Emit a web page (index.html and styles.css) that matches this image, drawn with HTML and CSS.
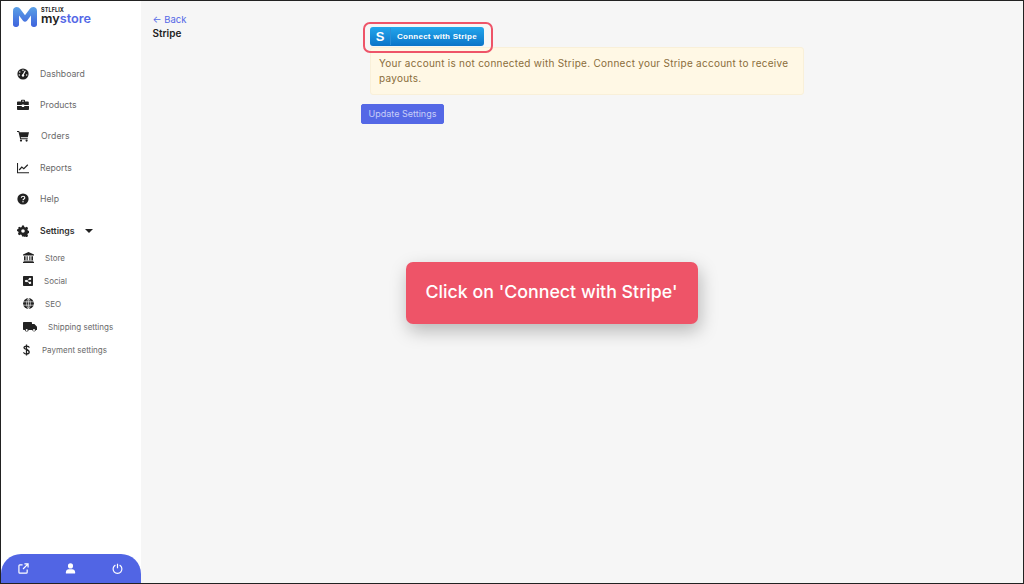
FILE: index.html
```html
<!DOCTYPE html>
<html lang="en">
<head>
  <meta charset="UTF-8">
  <meta name="viewport" content="width=device-width, initial-scale=1.0">
  <title>Stripe - mystore</title>
  <link rel="stylesheet" href="styles.css">
</head>
<body>
  <div class="frame">
    <aside class="sidebar">
      <div class="logo">
        <svg class="logo-mark" viewBox="0 0 24 20" width="24" height="20">
          <defs>
            <linearGradient id="logoGrad" x1="0" y1="0" x2="0" y2="1">
              <stop offset="0" stop-color="#5aa0e6"/>
              <stop offset="1" stop-color="#3f63dd"/>
            </linearGradient>
          </defs>
          <path fill="url(#logoGrad)" d="M0 4c0-3 1.800-4 3.700-4 1.600 0 2.700.7 3.600 2L12 8.200 16.700 2c.9-1.300 2-2 3.600-2C22.200 0 24 1 24 4v13.500c0 1.600-1.100 2.500-2.700 2.500h-.6c-1.600 0-2.700-.9-2.700-2.500V8.500l-4 5.200c-1.200 1.500-2.800 1.500-4 0l-4-5.200v9c0 1.600-1.100 2.500-2.700 2.500h-.6C1.100 20 0 19.100 0 17.500z"/>
        </svg>
        <div class="logo-text">
          <span class="logo-small">STLFLIX</span>
          <span class="logo-name">my<b>store</b></span>
        </div>
      </div>

      <nav class="nav">
        <a class="nav-item"><svg class="icon" viewBox="0 0 12 12"><circle cx="6" cy="6" r="5.600"/><path d="M6 7L8.300 2.800" stroke="#fff" stroke-width="1.200"/><circle cx="6" cy="2.300" r=".7" fill="#fff"/><circle cx="2.800" cy="4" r=".7" fill="#fff"/><circle cx="2.300" cy="7" r=".7" fill="#fff"/><circle cx="9.700" cy="7" r=".7" fill="#fff"/><circle cx="6" cy="7.500" r="1.200" fill="#fff"/></svg>Dashboard</a>
        <a class="nav-item"><svg class="icon" viewBox="0 0 12 12"><path d="M4 2.500V1.500C4 1 4.400.8 4.800.8h2.400c.4 0 .8.200.8.700v1h2.700c.6 0 1.100.4 1.100 1V6H7.200v-.6H4.800V6H0V3.500c0-.6.500-1 1.100-1zm1 0h2v-.7H5zM0 7h4.800v1h2.400V7H12v3c0 .6-.5 1-1.100 1H1.100C.5 11 0 10.600 0 10z"/></svg>Products</a>
        <a class="nav-item nav-orders"><svg class="icon" viewBox="0 0 12 12"><path d="M0 1h2.200l.4 1.200H12l-1.200 5H3.800l.2 1h6.700v1H3.200L1.500 2H0z"/><circle cx="4" cy="10.600" r="1.100"/><circle cx="9.600" cy="10.600" r="1.100"/></svg>Orders</a>
        <a class="nav-item"><svg class="icon" viewBox="0 0 12 12"><path d="M.5 1v9.800H12" fill="none" stroke="#222" stroke-width="1.100"/><path d="M2.200 8l2.600-3 2 1.600L10.800 2.800" fill="none" stroke="#222" stroke-width="1.200"/></svg>Reports</a>
        <a class="nav-item"><svg class="icon" viewBox="0 0 12 12"><circle cx="6" cy="6" r="5.600"/><path d="M4.300 4.700C4.400 3.700 5.100 3.200 6 3.200c1 0 1.800.6 1.800 1.500C7.800 6 6 6 6 7.200" fill="none" stroke="#fff" stroke-width="1.100"/><circle cx="6" cy="8.800" r=".7" fill="#fff"/></svg>Help</a>
        <a class="nav-item nav-active"><svg class="icon" viewBox="0 0 12 12"><path fill-rule="evenodd" d="M5 .4h2l.3 1.500 1 .5L9.700 1.700 11.100 3.100l-.7 1.400.4 1 1.200.5v2l-1.200.4-.4 1 .7 1.500-1.400 1.400-1.400-.7-1 .4L7 11.600H5l-.3-1.500-1-.5-1.400.7L.9 8.900l.7-1.400-.4-1L0 6V4.400l1.200-.4.4-1L.9 3.100 2.300 1.700l1.400.7 1-.5zM6 4.200a1.800 1.800 0 1 0 0 3.600 1.800 1.800 0 0 0 0-3.600z"/></svg>Settings<span class="caret"></span></a>
      </nav>

      <div class="subnav">
        <a class="sub-item"><svg class="sub-icon store-icon" viewBox="0 0 11 11"><path d="M5.500 0L11 2.500V3.500H0V2.500zM1 4.200h1.600v4H1zM3.600 4.200h1.100v4H3.600zM6.300 4.200h1.100v4H6.300zM8.400 4.200H10v4H8.400zM.6 8.800h9.800v1H.6zM0 10h11v1H0z"/></svg>Store</a>
        <a class="sub-item"><svg class="sub-icon social-icon" viewBox="0 0 10 10"><path fill-rule="evenodd" d="M1 0h8c.6 0 1 .4 1 1v8c0 .6-.4 1-1 1H1c-.6 0-1-.4-1-1V1c0-.6.400-1 1-1zm6 1.700a1.200 1.200 0 0 0-1.200 1.500L4 4.200a1.200 1.200 0 1 0 0 1.600l1.800 1a1.200 1.200 0 1 0 .4-.8l-1.800-1a1 1 0 0 0 0-.3l1.800-1A1.200 1.200 0 1 0 7 1.700z"/></svg>Social</a>
        <a class="sub-item"><svg class="sub-icon seo-icon" viewBox="0 0 11 11"><circle cx="5.500" cy="5.500" r="5.400"/><path d="M0 3.800h11M0 7.200h11M5.500 0v11M5.500 0C3 2.500 3 8.500 5.500 11M5.500 0C8 2.500 8 8.500 5.500 11" fill="none" stroke="#fff" stroke-width=".6"/></svg>SEO</a>
        <a class="sub-item"><svg class="sub-icon ship-icon" viewBox="0 0 14 10"><path d="M1 0h7c.6 0 1 .4 1 1v1h2.400L14 4.800V8h-1a2 2 0 0 1-3.800 0H5.700a2 2 0 0 1-3.900 0H1C.4 8 0 7.600 0 7V1C0 .4.400 0 1 0z"/><circle cx="3.700" cy="8" r="1" fill="#fff"/><circle cx="11" cy="8" r="1" fill="#fff"/></svg>Shipping settings</a>
        <a class="sub-item"><svg class="sub-icon pay-icon" viewBox="0 0 7 12"><path d="M6.300 3.700C6.100 2.600 5 2.200 3.500 2.200S1 2.700 1 3.700c0 2.300 5.200 1.200 5.200 4.500 0 1.100-1.100 1.800-2.700 1.800S.7 9.400.6 8.200M3.500.5v11" fill="none" stroke="#222" stroke-width="1.300"/></svg>Payment settings</a>
      </div>

      <div class="sidebar-foot">
        <svg class="foot-icon" viewBox="0 0 12 12"><path d="M5 2H2C1.300 2 1 2.400 1 3v7c0 .6.300 1 1 1h7c.6 0 1-.4 1-1V7M7 1h4v4M11 1L5.500 6.500" fill="none" stroke="#fff" stroke-width="1.300"/></svg>
        <svg class="foot-icon" viewBox="0 0 12 12"><circle cx="6" cy="3.200" r="2.800" fill="#fff"/><path fill="#fff" d="M1 11.500V10c0-2 1.500-3.300 3-3.300h4c1.500 0 3 1.300 3 3.300v1.500z"/></svg>
        <svg class="foot-icon" viewBox="0 0 12 12"><path d="M3.700 2.300a4.800 4.800 0 1 0 4.600 0M6 .7v5" fill="none" stroke="#fff" stroke-width="1.300"/></svg>
      </div>
    </aside>

    <main class="content">
      <div class="side-head">
        <a class="back">← Back</a>
        <h1 class="title">Stripe</h1>
      </div>
      <div class="panel">
        <div class="stripe-block">
          <a class="stripe-btn">
            <span class="stripe-s">S</span>
            <span class="stripe-label">Connect with Stripe</span>
          </a>
          <div class="alert">Your account is not connected with Stripe. Connect your Stripe account to receive payouts.</div>
        </div>
        <button class="update-btn">Update Settings</button>
      </div>
    </main>

    <div class="highlight"></div>
    <div class="callout">Click on 'Connect with Stripe'</div>
  </div>
</body>
</html>
```

FILE: styles.css
```css
* {
  box-sizing: border-box;
}
html, body {
  margin: 0;
  height: 100%;
}
body {
  font-family: Inter, "Liberation Sans", sans-serif;
  color: #222;
}
a {
  text-decoration: none;
}
.frame {
  position: relative;
  display: flex;
  width: 1024px;
  height: 584px;
  border: 1px solid #222;
  border-left-width: 1.5px;
  background-color: #f6f6f6;
  overflow: hidden;
}

/* sidebar */
.sidebar {
  position: relative;
  display: flex;
  flex-direction: column;
  width: 139.500px;
  flex-shrink: 0;
  background-color: #fff;
}
.logo {
  display: flex;
  align-items: flex-start;
  gap: 4px;
  padding: 6px 0 0 12px;
  height: 57px;
}
.logo-mark {
  flex-shrink: 0;
}
.logo-text {
  display: flex;
  flex-direction: column;
}
.logo-small {
  font-size: 5.500px;
  font-weight: 700;
  line-height: 6px;
  letter-spacing: .1px;
}
.logo-name {
  font-size: 12.700px;
  font-weight: 600;
  line-height: 11.500px;
  color: #222;
}
.logo-name b {
  font-weight: 600;
  color: #5468e6;
}
.nav {
  display: flex;
  flex-direction: column;
}
.nav-item {
  display: flex;
  align-items: center;
  height: 31.400px;
  padding-left: 16px;
  font-size: 8.700px;
  color: #6a6a6a;
}
.nav-orders {
  letter-spacing: .1px;
}
.icon {
  width: 12px;
  height: 12px;
  margin-right: 11px;
  flex-shrink: 0;
  fill: #222;
}
.nav-orders .icon {
  margin-right: 12px;
}
.nav-active {
  color: #333;
  font-weight: 600;
}
.caret {
  width: 0;
  height: 0;
  margin-left: 11px;
  border-left: 4px solid transparent;
  border-right: 4px solid transparent;
  border-top: 4px solid #222;
}
.subnav {
  display: flex;
  flex-direction: column;
}
.sub-item {
  display: flex;
  align-items: center;
  height: 23px;
  padding-left: 22px;
  font-size: 8px;
  color: #6a6a6a;
}
.sub-icon {
  flex-shrink: 0;
  fill: #222;
}
.store-icon {
  width: 11px;
  height: 11px;
  margin-right: 11px;
}
.social-icon {
  width: 10px;
  height: 10px;
  margin-right: 11px;
}
.seo-icon {
  width: 11px;
  height: 11px;
  margin-right: 11px;
}
.ship-icon {
  width: 14px;
  height: 10px;
  margin-right: 11px;
}
.pay-icon {
  width: 7px;
  height: 12px;
  margin-right: 12px;
}
.sidebar-foot {
  display: flex;
  align-items: center;
  justify-content: space-between;
  margin-top: auto;
  height: 29px;
  padding: 0 18px 0 17px;
  background-color: #5165e4;
  border-radius: 20px 20px 0 0;
}
.foot-icon {
  width: 11px;
  height: 11px;
}

/* main */
.content {
  flex: 1;
  display: flex;
  padding: 12px 0 0 12px;
}
.side-head {
  width: 208.500px;
  flex-shrink: 0;
}
.back {
  display: block;
  font-size: 9.500px;
  line-height: 13px;
  color: #5468e6;
}
.title {
  margin: 0;
  font-size: 10px;
  line-height: 14px;
  font-weight: 600;
  color: #222;
}
.panel {
  padding-top: 14px;
}
.stripe-block {
  padding-left: 9px;
}
.stripe-btn {
  display: flex;
  align-items: center;
  width: 114px;
  height: 19px;
  border-radius: 3px;
  background: linear-gradient(#22a6ec, #0c74c8);
  color: #fff;
  font-family: "Liberation Sans", sans-serif;
  font-size: 8px;
  font-weight: 700;
}
.stripe-s {
  width: 21px;
  text-align: center;
  font-size: 13px;
  border-right: 1px solid #2a8fd8;
  line-height: 17px;
}
.stripe-label {
  padding-left: 6px;
  letter-spacing: .25px;
}
.alert {
  width: 434px;
  height: 48px;
  margin-top: 1px;
  padding: 8px 8px;
  background-color: #fff8e5;
  border: 1px solid #f9f0d9;
  border-radius: 3px;
  font-size: 10px;
  line-height: 14.500px;
  color: #8a6d3b;
  letter-spacing: .26px;
}
.update-btn {
  display: block;
  width: 83px;
  height: 20px;
  margin-top: 9px;
  padding: 0 0 2px;
  border: 1px solid #5468e6;
  border-radius: 2px;
  background-color: #5468e6;
  color: #c8cef8;
  font-family: Inter, "Liberation Sans", sans-serif;
  font-size: 9px;
}

/* overlays */
.highlight {
  position: absolute;
  left: 361.500px;
  top: 21px;
  width: 130px;
  height: 31px;
  border: 2px solid #ee5468;
  border-radius: 7px;
}
.callout {
  position: absolute;
  left: 404.500px;
  top: 261px;
  width: 292px;
  height: 62px;
  border-radius: 7px;
  background-color: #ee5468;
  box-shadow: 2px 7px 18px rgba(0, 0, 0, 0.26);
  color: #fff;
  font-size: 17.800px;
  font-weight: 500;
  line-height: 60px;
  text-align: center;
}
```
